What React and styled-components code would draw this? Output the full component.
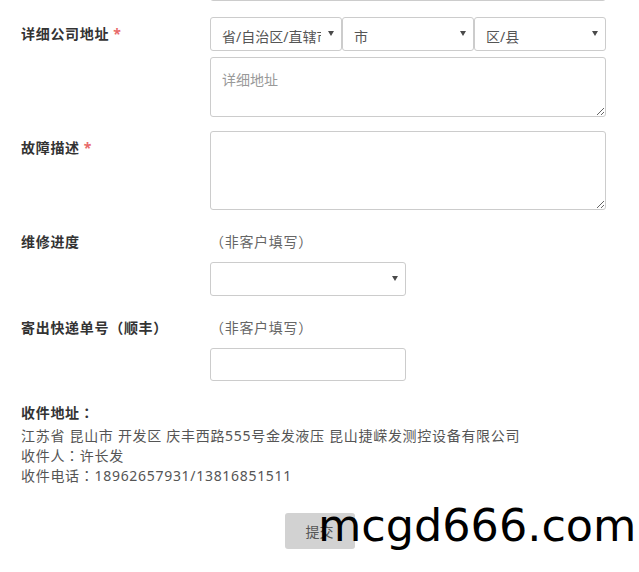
import React from "react";
import styled, { createGlobalStyle } from "styled-components";

const GlobalStyle = createGlobalStyle`
  html, body { margin: 0; padding: 0; background: #fff; }
  body {
    font-family: "Noto Sans", "Noto Sans CJK SC", sans-serif;
    font-size: 14px;
    color: #333;
    letter-spacing: 0.7px;
    overflow: hidden;
  }
  * { box-sizing: border-box; }
`;

const Page = styled.div`
  position: relative;
  width: 639px;
  height: 572px;
  padding: 0 33px 0 21px;
  overflow: hidden;
`;

const Form = styled.form`
  display: flex;
  flex-direction: column;
`;

const Row = styled.div`
  display: grid;
  grid-template-columns: 189px 396px;
  margin-bottom: ${(p) => p.$gap ?? 15}px;
`;

const Label = styled.label`
  padding-top: 7px;
  line-height: 20px;
  height: 27px;
  font-weight: bold;
  color: #333;
`;

const Star = styled.span`
  color: #e86a6a;
  margin-left: 4px;
  font-weight: bold;
  line-height: 1px;
`;

/* full-width punctuation centred in its cell, as in the reference */
const Punct = styled.span`
  font-family: "Noto Sans CJK TC", "Noto Sans CJK SC", sans-serif;
  line-height: 1px;
`;

const Field = styled.div`
  display: flex;
  flex-direction: column;
  gap: ${(p) => p.$gap ?? 0}px;
`;

const TextInput = styled.input`
  display: block;
  width: ${(p) => p.$width || "100%"};
  height: ${(p) => p.$height || 34}px;
  margin-top: ${(p) => p.$top || 0}px;
  border: 1px solid #ccc;
  border-radius: 3px;
  padding: 6px 11px;
  font: inherit;
  color: #555;
  background: #fff;
  outline: none;
`;

const SelectGroup = styled.div`
  display: grid;
  grid-template-columns: repeat(3, 1fr);
`;

const SelectWrap = styled.div`
  position: relative;
  width: ${(p) => p.$width || "100%"};
  &::after {
    content: "";
    position: absolute;
    right: 8px;
    top: 50%;
    margin-top: -3px;
    border-left: 3px solid transparent;
    border-right: 3px solid transparent;
    border-top: 5px solid #4a4a4a;
    pointer-events: none;
  }
`;

const Select = styled.select`
  appearance: none;
  -webkit-appearance: none;
  display: block;
  width: 100%;
  height: 34px;
  border: 1px solid #ccc;
  border-radius: 3px;
  padding: 5px 20px 0 11px;
  font: inherit;
  color: #555;
  background: #fff;
  outline: none;
`;

const TextArea = styled.textarea`
  display: block;
  width: 100%;
  height: ${(p) => p.$height}px;
  border: 1px solid #ccc;
  border-radius: 3px;
  padding: 12px 11px 8px;
  font: inherit;
  line-height: 20px;
  color: #555;
  background: #fff;
  outline: none;
  &::placeholder { color: #999; }
`;

const Hint = styled.div`
  padding-top: 7px;
  line-height: 20px;
  height: 27px;
  color: #666;
`;

const Address = styled.div`
  margin-top: 7px;
  line-height: 20px;
  color: #555;
`;

const AddressLine = styled.div`
  height: 20px;
`;

const AddressTitle = styled(AddressLine)`
  font-weight: bold;
  color: #333;
  margin-bottom: 2.5px;
`;

const Actions = styled.div`
  display: flex;
  justify-content: center;
  margin-left: -21px;
  margin-right: -33px;
  margin-top: 27px;
`;

const SubmitButton = styled.button`
  width: 70px;
  height: 36px;
  border: none;
  border-radius: 3px;
  background: #d2d2d2;
  color: #555;
  font: inherit;
  letter-spacing: 0;
  cursor: pointer;
`;

const Watermark = styled.div`
  position: absolute;
  left: 318px;
  top: 504px;
  font-family: "DejaVu Sans", sans-serif;
  font-size: 44.5px;
  line-height: 1;
  letter-spacing: 0;
  color: #000;
  white-space: nowrap;
  pointer-events: none;
`;

export default function App() {
  return (
    <>
      <GlobalStyle />
      <Page>
        <Form onSubmit={(e) => e.preventDefault()}>
          <Row $gap={16}>
            <div />
            <Field>
              <TextInput $top={-33} />
            </Field>
          </Row>

          <Row $gap={14}>
            <Label>
              详细公司地址<Star>*</Star>
            </Label>
            <Field $gap={6}>
              <SelectGroup>
                <SelectWrap>
                  <Select defaultValue="p">
                    <option value="p">省/自治区/直辖市</option>
                  </Select>
                </SelectWrap>
                <SelectWrap>
                  <Select defaultValue="c">
                    <option value="c">市</option>
                  </Select>
                </SelectWrap>
                <SelectWrap>
                  <Select defaultValue="d">
                    <option value="d">区/县</option>
                  </Select>
                </SelectWrap>
              </SelectGroup>
              <TextArea $height={60} placeholder="详细地址" />
            </Field>
          </Row>

          <Row>
            <Label>
              故障描述<Star>*</Star>
            </Label>
            <Field>
              <TextArea $height={79} />
            </Field>
          </Row>

          <Row>
            <Label>维修进度</Label>
            <Field $gap={10}>
              <Hint>
                <Punct>（</Punct>非客户填写<Punct>）</Punct>
              </Hint>
              <SelectWrap $width="196px">
                <Select defaultValue="">
                  <option value=""></option>
                </Select>
              </SelectWrap>
            </Field>
          </Row>

          <Row>
            <Label>
              寄出快递单号<Punct>（</Punct>顺丰<Punct>）</Punct>
            </Label>
            <Field $gap={10}>
              <Hint>
                <Punct>（</Punct>非客户填写<Punct>）</Punct>
              </Hint>
              <TextInput $width="196px" $height={33} />
            </Field>
          </Row>

          <Address>
            <AddressTitle>
              收件地址<Punct>：</Punct>
            </AddressTitle>
            <AddressLine>江苏省 昆山市 开发区 庆丰西路555号金发液压 昆山捷嵘发测控设备有限公司</AddressLine>
            <AddressLine>
              收件人<Punct>：</Punct>许长发
            </AddressLine>
            <AddressLine>
              收件电话<Punct>：</Punct>18962657931/13816851511
            </AddressLine>
          </Address>

          <Actions>
            <SubmitButton type="submit">提交</SubmitButton>
          </Actions>
        </Form>
        <Watermark>mcgd666.com</Watermark>
      </Page>
    </>
  );
}
